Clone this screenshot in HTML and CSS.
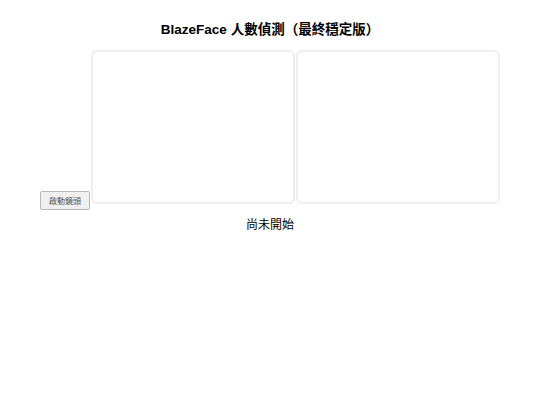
FILE: index.html
```html
<!DOCTYPE html>
<html>
<head>
    <meta charset="utf-8">
    <link rel="stylesheet" href="styles.css">
</head>
<body>
    <h1 class="title">BlazeFace 人數偵測（最終穩定版）</h1>
    <div class="stage">
        <button class="start-btn" id="startBtn">啟動鏡頭</button>
        <video class="view" id="video" autoplay muted playsinline></video>
        <canvas class="view" id="canvas"></canvas>
    </div>
    <div class="status" id="status">尚未開始</div>
</body>
</html>
```

FILE: styles.css
```css
body {
    margin: 8px;
    background: #fff;
    text-align: center;
    font-family: 'Liberation Sans', Arial, 'Noto Sans CJK TC', sans-serif;
    color: #000;
}

.title {
    font-size: 13.5px;
    font-weight: bold;
    margin: 10px 0 12px;
}

.stage {
    display: flex;
    justify-content: center;
    align-items: baseline;
    gap: 1px;
}

.start-btn {
    width: 50px;
    height: 19px;
    padding: 0;
    font-family: inherit;
    font-size: 8px;
    color: #555;
    background: #f0f0f0;
    border: 1px solid #b8b8b8;
    border-radius: 2px;
}

.view {
    display: block;
    width: 200px;
    height: 150px;
    border: 2px solid #eee;
    border-radius: 6px;
    background: #fff;
}

.status {
    margin-top: 5px;
    font-size: 12px;
}
```
